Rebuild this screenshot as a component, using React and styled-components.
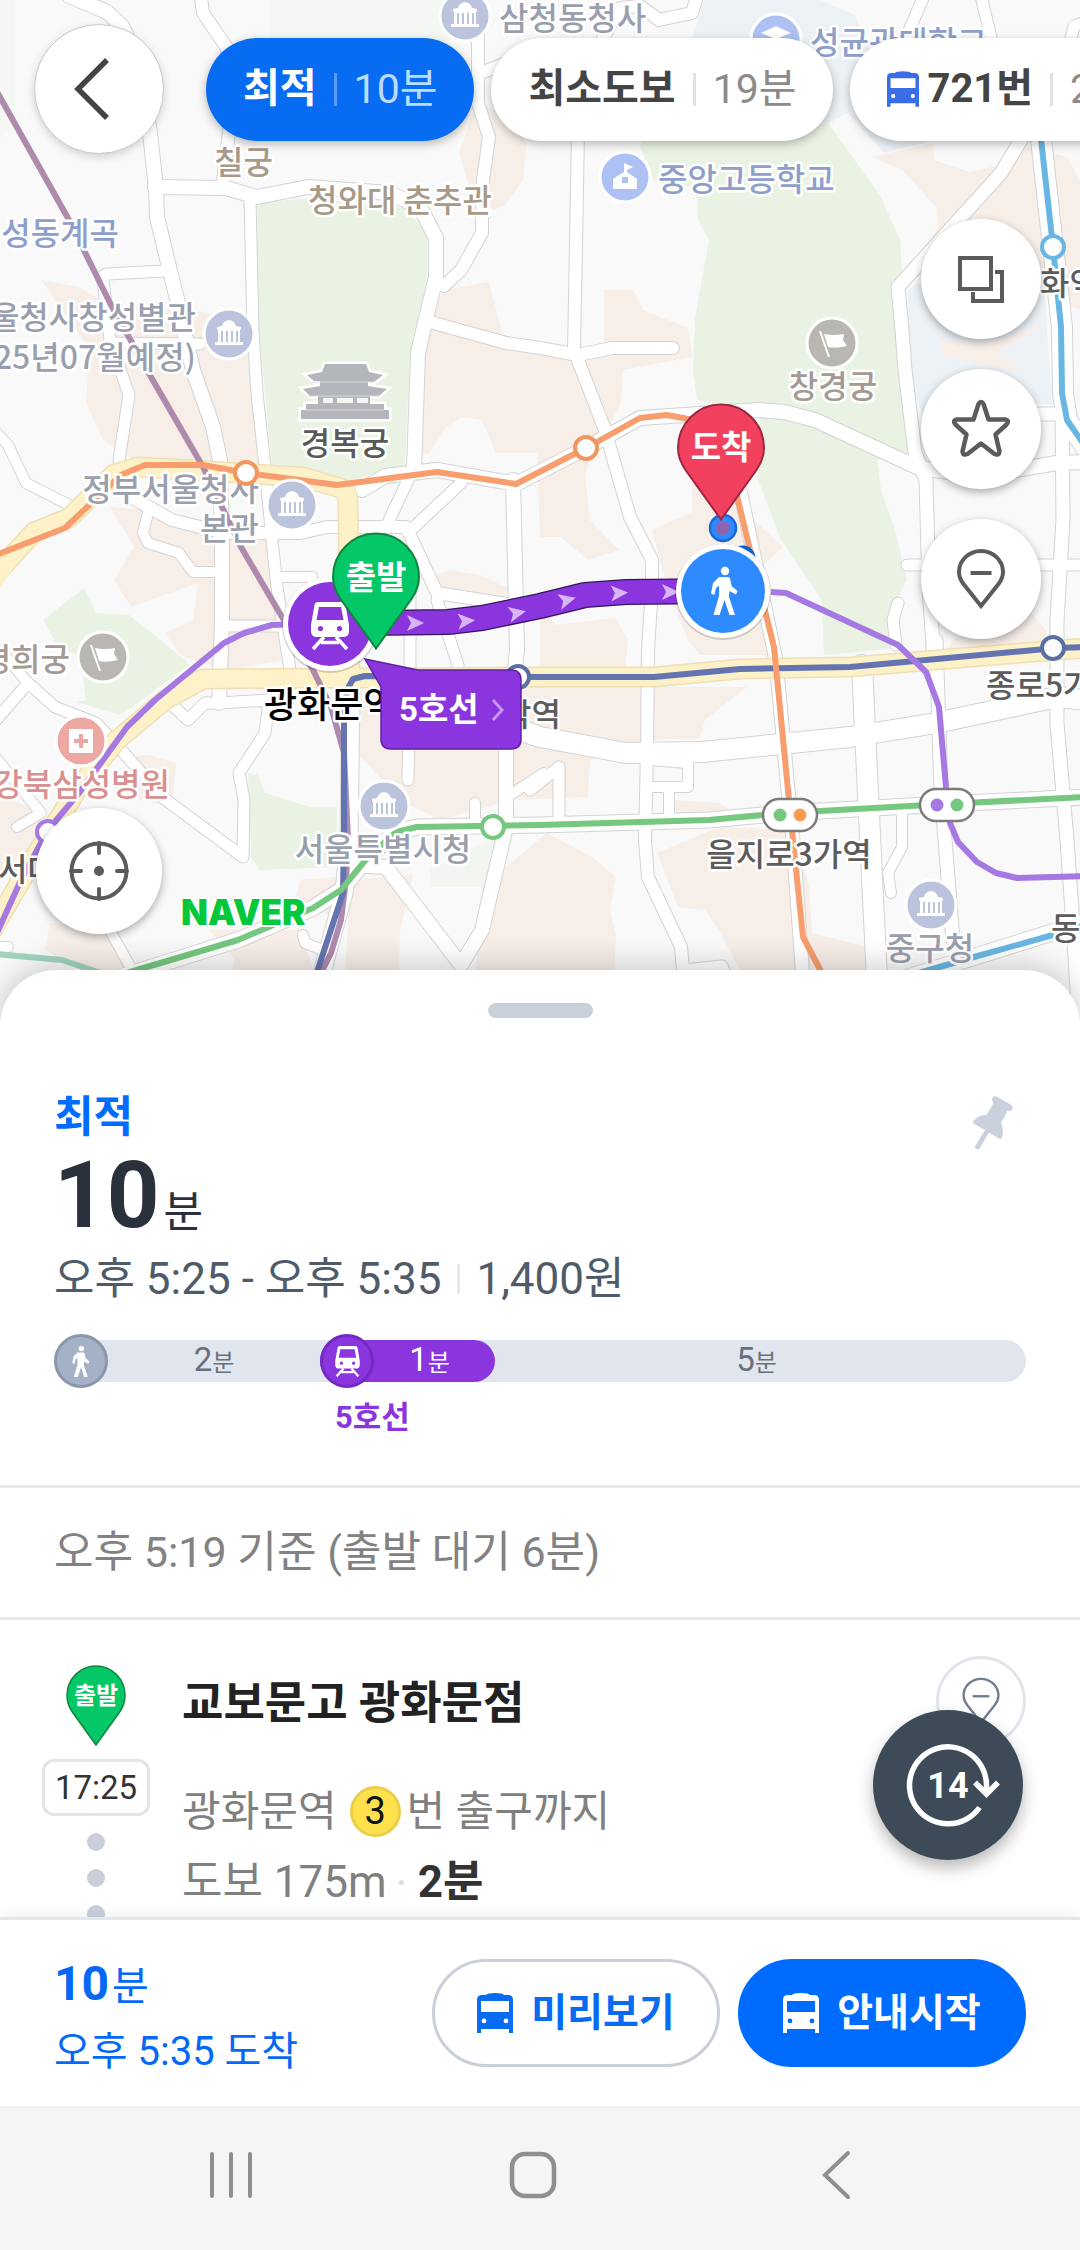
import React from "react";
import styled, { createGlobalStyle } from "styled-components";

const font = `Roboto, "Noto Sans CJK KR", sans-serif`;
const mapFont = `"Noto Sans CJK KR", sans-serif`;

const GlobalStyle = createGlobalStyle`
  * { box-sizing: border-box; }
  body { margin: 0; background: #fff; font-family: ${font}; }
  button { margin: 0; padding: 0; border: 0; background: none; font: inherit; color: inherit; cursor: pointer; }
  h1, h2, p, ol { margin: 0; padding: 0; font-weight: inherit; }
  svg { display: block; }
`;

/* ---------- layout ---------- */

const Screen = styled.div`
  display: flex;
  flex-direction: column;
  height: 100vh;
  min-height: 1700px;
  overflow: hidden;
`;

const MapArea = styled.section`
  position: relative;
  flex: none;
  height: 1040px;
  background: #f9f9f9;
`;

const MapDrawing = styled.svg`
  position: absolute;
  inset: 0;
  width: 100%;
  height: 100%;
  text {
    font-family: ${mapFont};
    font-weight: 500;
    font-size: 32px;
  }
`;

const MapLabel = styled.text`
  fill: ${(p) => p.$color};
  stroke: #fff;
  stroke-width: 5px;
  stroke-linejoin: round;
  paint-order: stroke;
`;

const PinText = styled.text`
  fill: #fff;
  && {
    font-size: 33px;
    font-weight: 700;
  }
`;

const StationText = styled(MapLabel)`
  && {
    font-size: 36px;
  }
`;

const NaverLogo = styled.text`
  fill: #03c83c;
  stroke: #fff;
  stroke-width: 4px;
  paint-order: stroke;
  && {
    font-family: Inter, sans-serif;
    font-weight: 900;
    font-size: 35px;
  }
`;

const LineCallout = styled.button`
  display: flex;
  align-items: center;
  gap: 12px;
  width: 140px;
  height: 79px;
  padding-left: 18px;
  color: #fff;
  font-size: 33px;
  font-weight: 700;
  line-height: 40px;
`;

const TopBar = styled.header`
  position: relative;
  display: flex;
  align-items: center;
  gap: 42px;
  padding: 24px 0 0 34px;
`;

const RouteTabs = styled.nav`
  display: flex;
  flex: 1;
  gap: 17px;
  min-width: 0;
  margin: -20px 0 -20px -20px;
  padding: 20px 0 20px 20px;
  overflow: hidden;
`;

const RouteTab = styled.button`
  display: flex;
  flex: none;
  align-items: center;
  height: 103px;
  padding: 0 37px;
  border-radius: 52px;
  background: ${(p) => (p.$active ? "#076cf2" : "#fff")};
  color: ${(p) => (p.$active ? "#fff" : "#444")};
  font-size: 40px;
  line-height: 48px;
  box-shadow: 0 3px 10px rgba(0, 0, 0, 0.28);
  white-space: nowrap;
  strong {
    font-weight: 700;
  }
  svg {
    margin-right: 8px;
    color: #3a6de8;
  }
`;

const TabDivider = styled.span`
  width: 3px;
  height: 33px;
  margin: 0 17px;
  background: ${(p) => (p.$active ? "#5a9cf8" : "#e2e2e2")};
`;

const TabTime = styled.span`
  color: ${(p) => (p.$active ? "#b9dcff" : "#8b8b8b")};
  font-size: 41px;
`;

const RoundButton = styled.button`
  display: flex;
  flex: none;
  align-items: center;
  justify-content: center;
  width: ${(p) => p.$size}px;
  height: ${(p) => p.$size}px;
  border-radius: 50%;
  border: ${(p) => (p.$outlined ? "1px solid #c9c9cf" : "0")};
  background: #fff;
  color: #5b5b5b;
  box-shadow: 0 3px 9px rgba(0, 0, 0, ${(p) => (p.$outlined ? 0.16 : 0.32)});
`;

const BackSlot = styled.div`
  svg {
    margin-right: 16px;
  }
`;

const MapTools = styled.div`
  position: absolute;
  top: 219px;
  right: 39px;
  display: flex;
  flex-direction: column;
  gap: 30px;
`;

const LocateSlot = styled.div`
  position: absolute;
  left: 36px;
  bottom: 106px;
`;

const Sheet = styled.main`
  position: relative;
  flex: 1;
  min-height: 0;
  margin-top: -70px;
  overflow: hidden;
  border-radius: 56px 56px 0 0;
  background: #fff;
  box-shadow: 0 -4px 30px rgba(0, 0, 0, 0.2);
`;

const Handle = styled.div`
  width: 105px;
  height: 15px;
  margin: 33px auto 0;
  border-radius: 8px;
  background: #c9d0da;
`;

const Summary = styled.section`
  position: relative;
  padding: 73px 54px 49px;
  border-bottom: 3px solid #e4e9ee;
`;

const Kind = styled.h2`
  color: #006cff;
  font-size: 43px;
  font-weight: 700;
  line-height: 52px;
`;

const Duration = styled.h1`
  display: flex;
  align-items: baseline;
  gap: 4px;
  margin-top: 11px;
  color: #2b313c;
  font-size: 43px;
  font-weight: 400;
  line-height: 43px;
  strong {
    font-size: 92px;
    line-height: 84px;
  }
`;

const Schedule = styled.p`
  display: flex;
  align-items: center;
  margin-top: 15px;
  color: #4f5b69;
  font-size: 44px;
  line-height: 52px;
`;

const ThinDivider = styled.span`
  width: 3px;
  height: 30px;
  margin: 0 16px;
  background: #e4e7ec;
`;

const PinButton = styled.button`
  position: absolute;
  top: 78px;
  right: 66px;
  color: #cbd1dc;
`;

const Timeline = styled.div`
  display: flex;
  align-items: flex-start;
  height: 102px;
  margin-top: 29px;
`;

const Segment = styled.div`
  position: relative;
  z-index: ${(p) => (p.$ride ? 1 : 0)};
  flex: ${(p) => p.$span} 1 0;
  min-width: 0;
`;

const barShape = {
  first: "margin-right: -21px; padding-right: 21px; border-radius: 21px 0 0 21px;",
  ride: "padding-right: 10px; border-radius: 21px;",
  last: "margin-left: -21px; padding-left: 13px; border-radius: 0 21px 21px 0;",
};

const SegmentBar = styled.div`
  display: flex;
  align-items: center;
  height: 42px;
  margin: 6px 0;
  background: ${(p) => (p.$place === "ride" ? "#8a35de" : "#e1e6ee")};
  ${(p) => barShape[p.$place]}
`;

const SegmentBadge = styled.span`
  display: flex;
  flex: none;
  align-items: center;
  justify-content: center;
  width: 54px;
  height: 54px;
  border: 3px solid ${(p) => (p.$ride ? "#7429c4" : "#8b96aa")};
  border-radius: 50%;
  background: ${(p) => (p.$ride ? "#8a35de" : "#a5b1c6")};
  color: #fff;
`;

const SegmentTime = styled.span`
  flex: 1;
  color: ${(p) => (p.$ride ? "#fff" : "#696f7c")};
  font-size: 33px;
  line-height: 42px;
  text-align: center;
  small {
    font-size: 24px;
  }
`;

const LineName = styled.p`
  padding: 12px 0 0 15px;
  color: #8a35de;
  font-size: 31px;
  font-weight: 700;
  line-height: 36px;
`;

const Notice = styled.p`
  padding: 38px 54px 39px;
  border-bottom: 3px solid #e4e9ee;
  color: #828282;
  font-size: 43px;
  line-height: 52px;
`;

const Step = styled.section`
  display: flex;
  align-items: flex-start;
  padding: 36px 54px 0 42px;
`;

const Rail = styled.div`
  display: flex;
  flex: none;
  flex-direction: column;
  align-items: center;
  width: 108px;
  margin-top: 9px;
  text {
    font-family: ${mapFont};
    font-size: 24px;
    font-weight: 700;
    fill: #fff;
  }
`;

const TimeBox = styled.time`
  width: 108px;
  margin: 13px 0 17px;
  border: 3px solid #e4e4e4;
  border-radius: 12px;
  color: #333;
  font-size: 33px;
  line-height: 51px;
  text-align: center;
`;

const Dots = styled.div`
  display: flex;
  flex-direction: column;
  gap: 18px;
`;

const Dot = styled.span`
  width: 18px;
  height: 18px;
  border-radius: 50%;
  background: #cacfdb;
`;

const StepBody = styled.div`
  flex: 1;
  min-width: 0;
  margin: 20px 0 0 32px;
  color: #808080;
`;

const Place = styled.h2`
  color: #222;
  font-size: 45px;
  font-weight: 700;
  line-height: 56px;
`;

const ExitLine = styled.p`
  display: flex;
  align-items: center;
  height: 51px;
  margin-top: 54px;
  font-size: 42px;
  line-height: 51px;
`;

const ExitBadge = styled.span`
  display: flex;
  align-items: center;
  justify-content: center;
  width: 51px;
  height: 51px;
  margin: 0 6px 0 13px;
  border: 3px solid #ebcf47;
  border-radius: 50%;
  background: #ffe14d;
  color: #111;
  font-size: 38px;
`;

const WalkLine = styled.p`
  display: flex;
  align-items: center;
  margin-top: 19px;
  font-size: 44px;
  line-height: 52px;
  strong {
    color: #333;
  }
`;

const Separator = styled.span`
  width: 5px;
  height: 5px;
  margin: 0 14px 0 12px;
  border-radius: 50%;
  background: #dcdcdc;
`;

const SpotButton = styled.button`
  display: flex;
  flex: none;
  justify-content: center;
  width: 90px;
  height: 90px;
  padding-top: 18px;
  border: 3px solid #e1e4ea;
  border-radius: 50%;
  color: #707c90;
`;

const RefreshButton = styled.button`
  position: absolute;
  right: 57px;
  bottom: 57px;
  display: flex;
  align-items: center;
  justify-content: center;
  width: 150px;
  height: 150px;
  border-radius: 50%;
  background: #3d4a57;
  box-shadow: 0 8px 16px rgba(0, 0, 0, 0.28);
  text {
    font-family: Roboto, sans-serif;
    font-size: 36px;
    font-weight: 700;
    fill: #fff;
  }
`;

const Footer = styled.footer`
  position: relative;
  display: flex;
  flex: none;
  align-items: center;
  gap: 18px;
  padding: 30px 54px;
  border-top: 3px solid #e1e7ed;
  background: #fff;
  box-shadow: 0 -3px 12px rgba(0, 0, 0, 0.06);
`;

const Arrival = styled.div`
  display: flex;
  flex: 1;
  flex-direction: column;
  gap: 10px;
  color: #0569f5;
  font-size: 40px;
  line-height: 48px;
`;

const ArrivalTotal = styled.p`
  display: flex;
  align-items: baseline;
  gap: 3px;
  strong {
    font-size: 48px;
    line-height: 68px;
  }
`;

const ActionButton = styled.button`
  display: flex;
  align-items: center;
  justify-content: center;
  gap: 18px;
  width: 288px;
  height: 108px;
  border: 3px solid ${(p) => (p.$primary ? "#006cff" : "#c9d0da")};
  border-radius: 54px;
  background: ${(p) => (p.$primary ? "#006cff" : "#fff")};
  color: ${(p) => (p.$primary ? "#fff" : "#076cf2")};
  font-size: 39px;
  font-weight: 700;
  line-height: 48px;
`;

const SystemBar = styled.nav`
  display: grid;
  flex: none;
  grid-template-columns: repeat(3, 1fr);
  height: 144px;
  padding: 0 93px 6px 80px;
  background: #f5f5f5;
`;

const SystemKey = styled.button`
  display: flex;
  align-items: center;
  justify-content: center;
  color: #8f8f8f;
`;

/* ---------- icons ---------- */

const BusIcon = ({ width = 36, height = 40 }) => (
  <svg width={width} height={height} viewBox="0 0 36 40" fill="currentColor" aria-hidden="true">
    <path
      fillRule="evenodd"
      d="M9 2Q10 0 18 0T27 2H31Q36 2 36 7V40H32V36H4V40H0V7Q0 2 5 2ZM4 8V19H32V8ZM7 25.5a2.4 2.4 0 1 0 0 4.8 2.4 2.4 0 0 0 0-4.8ZM29 25.5a2.4 2.4 0 1 0 0 4.8 2.4 2.4 0 0 0 0-4.8Z"
    />
  </svg>
);

const walkPath =
  "M8 10H17Q19 10 19.4 13L20.6 19 26.5 24 25 27.5 18.4 24 18 30 24 48H18.5L13.5 33 8.5 48H2.5L8 29V18.5L5 21 3.4 28 0 26.5 2 16Z";

const WalkIcon = () => (
  <svg width="18" height="31" viewBox="0 0 27 48" fill="currentColor" aria-hidden="true">
    <circle cx="14" cy="4" r="4.2" />
    <path d={walkPath} />
  </svg>
);

const trainPath =
  "M7 0H31Q34 0 34.5 3L38 23V29Q38 35 32 35H6Q0 35 0 29V23L3.500 3Q4 0 7 0ZM8 5 5.500 18H32.500L30 5ZM9.500 24a2.600 2.600 0 1 0 0 5.200 2.600 2.600 0 0 0 0-5.200ZM28.500 24a2.600 2.600 0 1 0 0 5.200 2.600 2.600 0 0 0 0-5.200Z";

const TrainShape = () => (
  <>
    <path fill="currentColor" fillRule="evenodd" d={trainPath} />
    <path d="M13 35 2 47M25 35 36 47M10 40.500H28" fill="none" stroke="currentColor" strokeWidth="3.500" />
  </>
);

const TrainIcon = () => (
  <svg width="25" height="31" viewBox="0 0 38 48" aria-hidden="true">
    <TrainShape />
  </svg>
);

const BackIcon = () => (
  <svg width="36" height="66" viewBox="0 0 36 66" aria-hidden="true">
    <path d="M34 4 5 33 34 62" fill="none" stroke="#444" strokeWidth="5.500" />
  </svg>
);

const LayersIcon = () => (
  <svg width="48" height="48" viewBox="0 0 48 48" fill="none" stroke="currentColor" strokeWidth="4" aria-hidden="true">
    <path d="M3 3H34V34H3ZM38 17H45V46H16V37" />
  </svg>
);

const StarIcon = () => (
  <svg width="60" height="60" viewBox="0 0 60 60" aria-hidden="true">
    <path
      d="M27.500 5Q30 1 32.500 5L37.500 20.500 54 20.500Q59 21.500 55.500 25.500L44.500 35.500 48.500 52.500Q48 57 43.500 55L30 44.500 16.500 55Q12 57 11.500 52.500L15.500 35.500 4.500 25.500Q1 21.500 6 20.500L22.500 20.500Z"
      fill="none"
      stroke="currentColor"
      strokeWidth="4.500"
      strokeLinejoin="round"
    />
  </svg>
);

const SpotIcon = ({ width, height, stroke }) => (
  <svg width={width} height={height} viewBox="0 0 48 60" fill="none" stroke="currentColor" strokeWidth={stroke} aria-hidden="true">
    <path d="M24 57 6.500 35Q2 29 2 23A22 21 0 0 1 46 23Q46 29 41.500 35Z" />
    <path d="M13.500 24H34.500" />
  </svg>
);

const LocateIcon = () => (
  <svg width="60" height="60" viewBox="0 0 60 60" fill="none" stroke="currentColor" strokeWidth="4" aria-hidden="true">
    <circle cx="30" cy="30" r="27.500" />
    <path d="M30 2V12M30 48V58M2 30H12M48 30H58" strokeLinecap="round" />
    <circle cx="30" cy="30" r="5" fill="currentColor" stroke="none" />
  </svg>
);

const PushPinIcon = () => (
  <svg width="42" height="54" viewBox="0 0 42 54" fill="currentColor" aria-hidden="true">
    <path d="M21.500.5Q23-.3 25 .8L38.500 8.500Q41.500 10.300 40.500 13Q39.200 15.800 35.500 15L29 27Q32.500 34 30 41.500Q29 43.500 27.500 42.800L17 36.500 7.500 52.500Q6 54 4.200 53Q2.500 52 3.300 50L13 34 1.500 27.500Q.5 26.500 1.500 25Q6.500 18.500 14.500 19L21.500 7Q18.500 3 21.500.5Z" />
  </svg>
);

const pinPath = "M44 116.500 8.500 67Q1 56 1 45A43 43.500 0 0 1 87 45Q87 56 79.500 67Z";

const RefreshIcon = () => (
  <svg width="104" height="84" viewBox="-7 0 104 84" fill="none" stroke="#fff" strokeWidth="5.500" aria-hidden="true">
    <path d="M83.500 51V42A38.500 38.500 0 1 0 76.500 64.500" />
    <path d="M72 39.500 83.500 51 95 39.500" />
    <text x="45" y="55" textAnchor="middle" stroke="none">14</text>
  </svg>
);

/* ---------- map data ---------- */

const areas = [
  ["#ecf1f5", "704,0 820,0 855,15 870,50 935,140 884,153 862,128 848,113 830,122 815,140 690,100 693,37"],
  ["#ecf1f5", "908,290 950,262 1043,267 1052,405 1000,400 922,413 905,370"],
  ["#f7eee8", "872,157 933,143 934,160 970,172 1000,165 1029,147 1067,157 1080,180 1080,310 1058,300 1045,267 919,267 938,227 936,207 902,170"],
  ["#f7eee8", "942,342 1000,340 1050,322 1000,350 1020,372 942,356"],
  ["#f7eee8", "478,100 505,118 527,143 523,180 505,205 494,210 470,190 459,152"],
  ["#f7eee8", "444,290 489,282 503,335 540,345 604,350 604,290 633,290 643,310 688,328 692,357 623,370 621,403 585,473 590,520 619,550 588,560 561,537 540,537 537,453 496,453 482,420 461,417 445,428 430,453 418,455 424,327"],
  ["#f7eee8", "41,280 79,287 110,305 190,310 250,320 258,400 269,467 207,465 138,463 103,440 86,403 90,350"],
  ["#f7eee8", "110,507 150,510 224,535 272,540 286,660 224,670 180,655 165,633 193,620 198,583 131,607 114,580 134,547"],
  ["#eaf3e3", "43,620 84,588 96,613 129,615 169,647 190,665 120,715 76,702 86,700 80,655 60,650"],
  ["#eaf3e3", "257,203 310,198 406,208 427,235 427,277 417,330 410,353 405,467 362,477 337,485 303,468 272,467 258,320"],
  ["#eaf3e3", "647,130 818,130 826,120 881,197 900,240 903,283 892,290 895,330 902,387 912,453 877,460 881,490 895,530 907,580 891,610 898,648 824,655 822,600 781,540 757,477 760,415 697,400 693,370 695,320 697,307 709,240 698,220 697,187 654,180 640,147"],
  ["#f7eee8", "692,483 735,503 783,547 764,565 770,655 700,655 688,640 668,590 652,530 692,512"],
  ["#f7eee8", "540,600 555,625 615,618 628,640 625,670 540,670"],
  ["#f7eee8", "946,655 952,640 1032,613 1046,630 1048,655"],
  ["#f7eee8", "340,690 540,687 747,687 705,720 700,738 650,740 590,760 588,797 510,800 440,820 400,800 350,745"],
  ["#f7eee8", "423,580 450,570 480,575 508,588 505,602 440,598"],
  ["#f7eee8", "124,757 148,755 176,763 172,807 140,800"],
  ["#f7eee8", "0,795 40,812 45,860 0,880"],
  ["#eaf3e3", "248,773 258,775 265,793 310,807 337,807 336,867 260,870 251,857"],
  ["#f3f5f1", "430,870 470,850 500,835 502,887 430,887"],
  ["#f7eee8", "50,923 110,930 130,965 90,975 45,950"],
  ["#f7eee8", "210,930 300,930 317,980 230,980 235,960"],
  ["#f7eee8", "300,880 337,877 330,915 295,900"],
  ["#f7eee8", "350,880 413,875 400,930 399,980 345,980"],
  ["#f7eee8", "482,887 547,833 592,857 616,877 610,910 616,935 614,980 475,980"],
  ["#f7eee8", "657,853 719,827 795,830 809,887 812,933 871,948 877,980 745,980 719,930 705,910 678,907"],
  ["#f7eee8", "675,800 720,803 735,815 672,820"],
];

const roads = [
  [14, "M69-4 107 12 122 26 138 60 150 133 156 188 157 217 169 267 178 303 193 370 213 427 220 460 222 540 222 620 219 703"],
  [12, "M201-2 203 13 227 48 232 90 229 133 222 188"],
  [14, "M155 187 226 188 257 197 308 187 389 193 420 207 436 238 436 277 424 327 418 353 414 470"],
  [11, "M250 200 253 330 257 393 265 467 272 540 277 587 290 670"],
  [11, "M164 271 107 274Q103 274 103 280L110 340 129 395 119 460M110 343 200 344"],
  [12, "M478-2 478 103 489 137 482 187 482 233 461 270 444 286M478 74 520 58"],
  [12, "M430 322 506 343 540 348 578 355 612 348 673 348"],
  [12, "M602 40 620 8 640 6 659 20 692 13 697-4"],
  [12, "M578 130 575 300 574 350 605 430 630 517 652 560 652 587 648 650 647 750 645 840 648 877 681 947 684 980"],
  [13, "M1024 135 1001 173 898 287 902 330 905 370 915 453 926 480 929 587 934 660"],
  [11, "M924-4 905 40M981-4 994 50M1090 20 1074 26 1068 50"],
  [20, "M1040 130 1053 247 1062 327 1063 393 1067 420 1085 446"],
  [14, "M362 490 385 476 437 470 516 484 586 448 640 418 760 410 784 412 815 420 919 468 980 476 1057 463 1085 462"],
  [13, "M1062 410 1063 520 1057 620 1057 723 1067 840 1074 940 1080 1040M1030 414 1062 414"],
  [11, "M907 565 1085 565M898 603 893 620 896 645"],
  [10, "M-4 432 8 445 26 483 79 510"],
  [12, "M131 497 172 520 224 533 300 533 327 527 406 527 437 593 513 605"],
  [10, "M148 513 143 533 148 543 179 553 193 572 220 572M282 577 312 577"],
  [11, "M408 480 386 527M461 483 413 528M410 593 410 667 408 780M437 600 458 665"],
  [14, "M513 480 517 650 506 750 506 827 482 930 461 965 386 867 350 865"],
  [11, "M227 626 290 626M-4 720 28 683 55 707 96 723 124 753 162 797 243 857 244 800 239 773 265 733 269 700 219 703 205 703 188 720 172 705"],
  [10, "M28 683 0 650M-4 758 41 813 17 827M107 925 132 970M-4 947 8 947"],
  [10, "M303 935 305 943 328 952M475 803 475 825M544 773 510 795"],
  [17, "M351 690 349 840 344 893 320 980"],
  [20, "M520 730 540 737 626 753 702 752 850 737 936 723 1057 697 1085 700"],
  [20, "M862 665 867 773 877 980"],
  [13, "M936 640 941 790 953 940M740 490 776 660 788 790 793 840 803 980"],
  [10, "M654 787 688 787 688 763 650 760M669 790 669 822M902 810 902 847 888 873 891 893"],
  [11, "M530 790 559 767 559 822M684 970 722 966 728 980"],
  [15, "M120 977 238 940 313 908 341 890 368 857 396 832 417 827 540 825 709 820 784 813 946 804 1085 797"],
  [16, "M900 980 974 957 1085 922"],
];

const yellowRoads = [
  "M-14 940 45 840 79 787 117 740 165 700 203 679 344 678 540 677 654 677 740 669 850 667 1057 650 1090 648",
  "M-10 580 34 532 69 518 114 474 138 467 207 471 303 477 337 487Q348 490 348 502L350 680",
];

const rails = [
  ["#ae8aac", "M-4 90 69 220 110 303 151 377 203 467 241 547 282 617 313 670 331 707 344 753 348 840 346 880 341 920 331 953 320 975"],
  ["#6474b0", "M1085 647 1057 648 850 667 740 669 654 677 540 677 365 676 353 679 347 690 344 723 344 827 343 893 316 975"],
  ["#f79d6e", "M-4 555 65 528 121 475 145 465 203 465 246 473 337 485 437 472 516 484 586 448 640 418 667 415 720 425 738 500 750 550 774 647 788 790 793 840 803 937 824 977"],
  ["#76c77f", "M120 975 238 940 313 908 341 890 368 857 396 832 417 827 540 825 709 820 784 813 946 804 1085 797"],
  ["#a0d4be", "M-4 954 62 960 110 976"],
  ["#6ab6e2", "M1040 130 1053 247 1061 327 1062 393 1067 420 1085 446M905 977 974 957 1053 935 1085 925"],
  ["#a678e2", "M-4 935 21 880 48 830 79 793 127 727 155 700 224 643 244 633 272 625 300 624M771 592 786 593 898 645 926 672 939 707 946 787 950 823 958 842 977 862 996 873 1017 878 1085 876"],
];

const stations = [
  [246, 473, "#f0965f"],
  [586, 448, "#f0965f"],
  [1053, 247, "#6ab6e2"],
  [1053, 648, "#5b6fa3"],
  [518, 677, "#5b6fa3"],
  [48, 832, "#a678e2"],
  [493, 827, "#76c77f"],
];

const labels = [
  [499, 30, "start", "#9a9fae", "삼청동청사"],
  [810, 54, "start", "#8f9fcb", "성균관대학교"],
  [214, 174, "start", "#a89a88", "칠궁"],
  [400, 212, "middle", "#a89a88", "청와대 춘추관"],
  [119, 245, "end", "#8f9fcb", "성동계곡"],
  [196, 329, "end", "#9a9fae", "울청사창성별관"],
  [196, 369, "end", "#9a9fae", "25년07월예정)"],
  [345, 455, "middle", "#595959", "경복궁"],
  [259, 501, "end", "#9a9fae", "정부서울청사"],
  [259, 540, "end", "#9a9fae", "본관"],
  [833, 398, "middle", "#a39a94", "창경궁"],
  [658, 191, "start", "#8f9fcb", "중앙고등학교"],
  [1040, 295, "start", "#5c5c5c", "화역"],
  [70, 671, "end", "#a39a94", "경희궁"],
  [170, 796, "end", "#d99090", "강북삼성병원"],
  [-2, 881, "start", "#5c5c5c", "서대문역"],
  [561, 726, "end", "#5c5c5c", "종각역"],
  [383, 861, "middle", "#9a9fae", "서울특별시청"],
  [986, 697, "start", "#5c5c5c", "종로5가"],
  [789, 866, "middle", "#5c5c5c", "을지로3가역"],
  [930, 960, "middle", "#9a9fae", "중구청"],
  [1051, 940, "start", "#5c5c5c", "동대"],
];

const govSpots = [[465, 16], [229, 334], [292, 505], [384, 806], [931, 905]];
const flagSpots = [[832, 343], [103, 657]];
const arrows = [[415, 623, 0], [466, 621, -4], [517, 613, -12], [567, 600, -14], [619, 593, -3], [670, 592, 0]];

const SpotDisc = ({ x, y, color, children }) => (
  <g transform={`translate(${x} ${y})`}>
    <circle r="25" fill={color} stroke="#fff" strokeWidth="3" />
    {children}
  </g>
);

const Transfer = ({ x, y, left, right }) => (
  <g transform={`translate(${x} ${y})`}>
    <rect x="-27" y="-16" width="54" height="32" rx="16" fill="#fff" stroke="#7c7c7c" strokeWidth="2.500" />
    <circle cx="-10" r="6.500" fill={left} />
    <circle cx="10" r="6.500" fill={right} />
  </g>
);

const MapPicture = () => (
  <MapDrawing viewBox="0 0 1080 1040" preserveAspectRatio="xMidYMin slice" aria-label="경로 지도">
    <rect width="1080" height="1040" fill="#f9f9f9" />
    <path d="M0 0H15V120L0 140ZM270 0H460V40H270Z" fill="#f4f7f3" />
    {areas.map(([fill, points], i) => (
      <polygon key={i} points={points} fill={fill} />
    ))}
    <g fill="none" strokeLinecap="round" strokeLinejoin="round">
      {roads.map(([w, d], i) => (
        <path key={i} d={d} stroke="#d3d3d3" strokeWidth={w + 2} />
      ))}
      {roads.map(([w, d], i) => (
        <path key={i} d={d} stroke="#fff" strokeWidth={w} />
      ))}
      {yellowRoads.map((d) => (
        <path key={d} d={d} stroke="#efdfb4" strokeWidth="21" />
      ))}
      {yellowRoads.map((d) => (
        <path key={d} d={d} stroke="#fdf1c8" strokeWidth="18" />
      ))}
    </g>
    <polygon points="0,555 34,538 0,588" fill="#fdf1c8" />
    <g fill="none" strokeWidth="6" strokeLinejoin="round">
      {rails.map(([c, d]) => (
        <path key={c} d={d} stroke={c} />
      ))}
    </g>

    {labels.map(([x, y, anchor, color, name]) => (
      <MapLabel key={name} x={x} y={y} textAnchor={anchor} $color={color}>
        {name}
      </MapLabel>
    ))}
    <StationText x="264" y="718" $color="#000">광화문역</StationText>

    {stations.map(([x, y, c]) => (
      <circle key={`${x}-${y}`} cx={x} cy={y} r="11" fill="#fff" stroke={c} strokeWidth="4" />
    ))}
    <Transfer x={790} y={815} left="#76c77f" right="#fb9a51" />
    <Transfer x={947} y={805} left="#a678e2" right="#76c77f" />

    {govSpots.map(([x, y]) => (
      <SpotDisc key={`${x}-${y}`} x={x} y={y} color="#bcc3dd">
        <path
          d="M-12-5V-7L-7-8Q-6-13 0-14Q6-13 7-8L12-7V-5L11-4V8H14V11H-14V8H-11V-4ZM-8-3V8H-6V-3ZM-3-3V8H-1V-3ZM2-3V8H4V-3ZM7-3V8H9V-3Z"
          fill="#fff"
          fillRule="evenodd"
        />
      </SpotDisc>
    ))}
    {flagSpots.map(([x, y]) => (
      <SpotDisc key={`${x}-${y}`} x={x} y={y} color="#bab6b2">
        <path d="M-12-12-3 14" stroke="#fff" strokeWidth="2" />
        <path d="M-8-9Q2-7 12-9L11-3 15 3Q4 6-4 4Z" fill="#fff" />
      </SpotDisc>
    ))}
    <SpotDisc x={81} y={741} color="#eda8a4">
      <rect x="-12" y="-12" width="24" height="24" fill="#fff" />
      <path d="M0-7V7M-7 0H7" stroke="#eda8a4" strokeWidth="4" />
    </SpotDisc>
    <SpotDisc x={625} y={177} color="#adc2f2">
      <path d="M-1-14 8-10 2-7V-5L12 2V12H-12V2L-1-5ZM-3 0V6H3V0Z" fill="#fff" fillRule="evenodd" />
    </SpotDisc>
    <SpotDisc x={776} y={39} color="#adc2f2">
      <path d="M-15-6 0-13 15-6 0 0ZM-9-1 0 3 9-1V6Q0 12-9 6Z" fill="#fff" />
    </SpotDisc>

    <g fill="#b3b6ba" stroke="#fff" strokeWidth="5" paintOrder="stroke">
      <path d="M325 364H366L369 372 383 375 374 382H368V386L387 389 379 396H370V404H384V410H389V419H301V410H306V404H318V396H310L303 389 320 386V381H314L307 375 322 372Z" />
    </g>
    <path d="M323 398H333V403H323ZM337 398H353V403H337ZM357 398H368V403H357Z" fill="#f4f6f2" />
    <path d="M312 382H374M308 396H380M306 410H384" stroke="#d9dbdd" strokeWidth="1" />

    <NaverLogo x="181" y="925">NAVER</NaverLogo>

    <g fill="none" strokeLinejoin="round">
      <path d="M370 623 448 622 482 618 540 606 585 595 626 592 725 591" stroke="#32165c" strokeWidth="26" />
      <path d="M370 623 448 622 482 618 540 606 585 595 626 592 725 591" stroke="#8a35de" strokeWidth="23.500" />
    </g>
    {arrows.map(([x, y, turn]) => (
      <path key={x} d="M-8-8 9 0-8 8-4 0Z" transform={`translate(${x} ${y}) rotate(${turn})`} fill="#d8b6f6" />
    ))}

    <circle cx="743" cy="558" r="12.500" fill="#1160d8" />
    <circle cx="723" cy="528" r="13" fill="#2e8bff" stroke="#1a66dc" strokeWidth="2.500" />
    <circle cx="723" cy="592" r="48" fill="#000" opacity=".16" />
    <circle cx="723" cy="591" r="47" fill="#fff" />
    <circle cx="723" cy="591" r="42" fill="#2e8bff" />
    <g transform="translate(711 567)" fill="#fff">
      <circle cx="14" cy="4" r="4.200" />
      <path d={walkPath} />
    </g>
    <circle cx="330" cy="625" r="48" fill="#000" opacity=".16" />
    <circle cx="330" cy="624" r="47" fill="#fff" />
    <circle cx="330" cy="624" r="42" fill="#8a35de" />
    <g transform="translate(311 602)" color="#fff">
      <TrainShape />
    </g>
    <g transform="translate(332 532)">
      <path d={pinPath} fill="#04c868" stroke="#11833f" strokeWidth="2" />
      <PinText x="44" y="57" textAnchor="middle">출발</PinText>
    </g>
    <g transform="translate(677 403)">
      <path d={pinPath} fill="#f2415e" stroke="#9c2740" strokeWidth="2" />
      <PinText x="44" y="56" textAnchor="middle">도착</PinText>
    </g>
    <circle cx="723" cy="528" r="7" fill="#9063ae" />

    <path
      d="M365 659 418 670H511Q521 670 521 680V739Q521 749 511 749H391Q381 749 381 739V687Z"
      fill="#8a35de"
      stroke="#5f1fa3"
      strokeWidth="1.500"
    />
    <foreignObject x="381" y="670" width="140" height="79">
      <LineCallout type="button">
        5호선
        <svg width="14" height="24" viewBox="0 0 14 24" aria-hidden="true">
          <path d="M2 2 11 12 2 22" fill="none" stroke="#c596f2" strokeWidth="3" />
        </svg>
      </LineCallout>
    </foreignObject>
  </MapDrawing>
);

/* ---------- page ---------- */

const tabs = [
  { name: "최적", time: "10분", active: true },
  { name: "최소도보", time: "19분" },
  { name: "721번", time: "21분", bus: true },
];

export default function App() {
  return (
    <>
      <GlobalStyle />
      <Screen>
        <MapArea>
          <MapPicture />
          <TopBar>
            <BackSlot>
              <RoundButton type="button" $size={130} $outlined aria-label="뒤로">
                <BackIcon />
              </RoundButton>
            </BackSlot>
            <RouteTabs>
              {tabs.map((t) => (
                <RouteTab key={t.name} type="button" $active={t.active}>
                  {t.bus && <BusIcon width={32} height={36} />}
                  <strong>{t.name}</strong>
                  <TabDivider $active={t.active} />
                  <TabTime $active={t.active}>{t.time}</TabTime>
                </RouteTab>
              ))}
            </RouteTabs>
          </TopBar>
          <MapTools>
            <RoundButton type="button" $size={120} aria-label="지도 유형">
              <LayersIcon />
            </RoundButton>
            <RoundButton type="button" $size={120} aria-label="즐겨찾기">
              <StarIcon />
            </RoundButton>
            <RoundButton type="button" $size={120} aria-label="거리뷰">
              <SpotIcon width={48} height={60} stroke={4} />
            </RoundButton>
          </MapTools>
          <LocateSlot>
            <RoundButton type="button" $size={126} aria-label="현재 위치">
              <LocateIcon />
            </RoundButton>
          </LocateSlot>
        </MapArea>

        <Sheet>
          <Handle />
          <Summary>
            <Kind>최적</Kind>
            <Duration>
              <strong>10</strong>분
            </Duration>
            <Schedule>
              오후 5:25 - 오후 5:35
              <ThinDivider />
              1,400원
            </Schedule>
            <PinButton type="button" aria-label="고정">
              <PushPinIcon />
            </PinButton>
            <Timeline>
              <Segment $span={266}>
                <SegmentBar $place="first">
                  <SegmentBadge>
                    <WalkIcon />
                  </SegmentBadge>
                  <SegmentTime>
                    2<small>분</small>
                  </SegmentTime>
                </SegmentBar>
              </Segment>
              <Segment $span={175} $ride>
                <SegmentBar $place="ride">
                  <SegmentBadge $ride>
                    <TrainIcon />
                  </SegmentBadge>
                  <SegmentTime $ride>
                    1<small>분</small>
                  </SegmentTime>
                </SegmentBar>
                <LineName>5호선</LineName>
              </Segment>
              <Segment $span={531}>
                <SegmentBar $place="last">
                  <SegmentTime>
                    5<small>분</small>
                  </SegmentTime>
                </SegmentBar>
              </Segment>
            </Timeline>
          </Summary>

          <Notice>오후 5:19 기준 (출발 대기 6분)</Notice>

          <Step>
            <Rail>
              <svg width="60" height="81" viewBox="0 0 60 81">
                <path d="M30 80 6 46.500Q1 39 1 30.500A29 29.500 0 0 1 59 30.500Q59 39 54 46.500Z" fill="#04c868" stroke="#11833f" strokeWidth="1.500" />
                <text x="30" y="39" textAnchor="middle">출발</text>
              </svg>
              <TimeBox>17:25</TimeBox>
              <Dots>
                <Dot />
                <Dot />
                <Dot />
              </Dots>
            </Rail>
            <StepBody>
              <Place>교보문고 광화문점</Place>
              <ExitLine>
                광화문역<ExitBadge>3</ExitBadge>번 출구까지
              </ExitLine>
              <WalkLine>
                도보 175m
                <Separator />
                <strong>2분</strong>
              </WalkLine>
            </StepBody>
            <SpotButton type="button" aria-label="거리뷰">
              <SpotIcon width={38} height={48} stroke={3} />
            </SpotButton>
          </Step>

          <RefreshButton type="button" aria-label="새로고침">
            <RefreshIcon />
          </RefreshButton>
        </Sheet>

        <Footer>
          <Arrival>
            <ArrivalTotal>
              <strong>10</strong>분
            </ArrivalTotal>
            <p>오후 5:35 도착</p>
          </Arrival>
          <ActionButton type="button">
            <BusIcon />
            미리보기
          </ActionButton>
          <ActionButton type="button" $primary>
            <BusIcon />
            안내시작
          </ActionButton>
        </Footer>

        <SystemBar>
          <SystemKey type="button" aria-label="최근 앱">
            <svg width="44" height="48" viewBox="0 0 44 48" fill="none" stroke="currentColor" strokeWidth="4" strokeLinecap="round">
              <path d="M3 3V45M22 3V45M41 3V45" />
            </svg>
          </SystemKey>
          <SystemKey type="button" aria-label="홈">
            <svg width="48" height="48" viewBox="0 0 48 48" fill="none" stroke="currentColor" strokeWidth="4.500">
              <rect x="3" y="3" width="42" height="42" rx="13" />
            </svg>
          </SystemKey>
          <SystemKey type="button" aria-label="뒤로 가기">
            <svg width="30" height="50" viewBox="0 0 30 50" fill="none" stroke="currentColor" strokeWidth="4" strokeLinecap="round">
              <path d="M27 3 4 25 27 47" />
            </svg>
          </SystemKey>
        </SystemBar>
      </Screen>
    </>
  );
}
